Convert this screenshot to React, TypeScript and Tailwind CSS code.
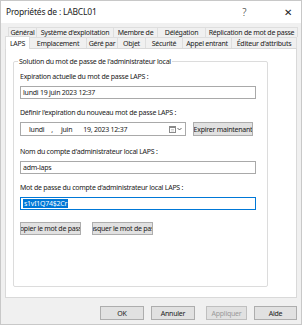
const tabsTop = [
  { label: "Général", w: "w-[29px]" },
  { label: "Système d'exploitation", w: "w-[77px]" },
  { label: "Membre de", w: "w-[44px]" },
  { label: "Délégation", w: "w-[48px]" },
  { label: "Réplication de mot de passe", w: "w-[92px]" },
];

const tabsBottom = [
  { label: "LAPS", w: "w-[25px]", active: true },
  { label: "Emplacement", w: "w-[57px]" },
  { label: "Géré par", w: "w-[31px]" },
  { label: "Objet", w: "w-[28px]" },
  { label: "Sécurité", w: "w-[37px]" },
  { label: "Appel entrant", w: "w-[49px]" },
  { label: "Éditeur d'attributs", w: "w-[65px]" },
];

const Field = ({ children, focused }: { children: React.ReactNode; focused?: boolean }) => (
  <div
    className={`flex h-[13px] w-[236px] items-center border bg-white px-[2px] ${
      focused ? "border-[#0078d7]" : "border-[#a9a9a9]"
    }`}
  >
    {children}
  </div>
);

const WinButton = ({ label, className }: { label: string; className?: string }) => (
  <div
    className={`flex h-[13px] items-center justify-center overflow-hidden whitespace-nowrap border border-[#adadad] bg-[#e1e1e1] ${className ?? ""}`}
  >
    {label}
  </div>
);

const App = () => {
  return (
    <div className="flex h-[325px] w-[302px] flex-col overflow-hidden border border-[#c8c8c8] bg-[#f0f0f0] font-['Noto_Sans',sans-serif] text-[7px] leading-none tracking-[-0.25px] text-[#1a1a1a]">
      {/* Title bar */}
      <div className="flex h-[22px] shrink-0 items-center justify-between bg-white pl-[5px] pr-[9px] text-[8.5px] tracking-[-0.2px]">
        <span>Propriétés de : LABCL01</span>
        <div className="flex items-center gap-[38px] text-[10px] font-light">
          <span>?</span>
          <span>✕</span>
        </div>
      </div>

      {/* Tabs */}
      <div className="mt-[4px] flex h-[10px] pl-[7px]">
        {tabsTop.map(t => (
          <div
            key={t.label}
            className={`flex ${t.w} items-center justify-center border-t border-r border-[#dedede] first:border-l`}
          >
            {t.label}
          </div>
        ))}
      </div>
      <div className="relative z-10 flex h-[11px] pl-[4px]">
        {tabsBottom.map(t => (
          <div
            key={t.label}
            className={`flex ${t.w} items-center justify-center border-t border-r border-[#dedede] first:border-l ${
              t.active ? "-mt-[1px] h-[13px] bg-white" : "bg-[#f0f0f0]"
            }`}
          >
            {t.label}
          </div>
        ))}
      </div>

      {/* Tab panel */}
      <div className="mx-[4px] h-[250px] border border-[#d9d9d9] bg-white px-[7px] pt-[9px]">
        <fieldset className="h-[229px] w-[255px] rounded-[2px] border border-[#dcdcdc] px-[6px]">
          <legend className="ml-[-2px] px-[1px]">Solution du mot de passe de l'administrateur local</legend>
          <div className="mt-[8px] flex flex-col">
            <span>Expiration actuelle du mot de passe LAPS :</span>
            <div className="mt-[6px]">
              <Field>lundi 19 juin 2023 12:37</Field>
            </div>

            <span className="mt-[10px]">Définir l'expiration du nouveau mot de passe LAPS :</span>
            <div className="mt-[6px] flex items-center gap-[7px]">
              <div className="flex h-[14px] w-[166px] items-center border border-[#a9a9a9] bg-white pl-[8px] pr-[3px]">
                <span>lundi</span>
                <span className="ml-[7px]">,</span>
                <span className="ml-[8px]">juin</span>
                <span className="ml-[11px]">19, 2023 12:37</span>
                <div className="ml-auto flex items-center gap-[1px]">
                  <svg width="7" height="7" viewBox="0 0 7 7">
                    <rect x="0.5" y="0.5" width="6" height="6" fill="#fff" stroke="#8a8a8a" />
                    <rect x="0.5" y="0.5" width="6" height="1.5" fill="#8a8a8a" />
                    <path d="M2 3.5h3M2 5h3" stroke="#b0b0b0" strokeWidth="0.6" />
                  </svg>
                  <svg width="5" height="4" viewBox="0 0 5 4">
                    <path d="M0.5 1l2 2 2-2" fill="none" stroke="#444" strokeWidth="0.8" />
                  </svg>
                </div>
              </div>
              <WinButton label="Expirer maintenant" className="h-[14px] w-[60px]" />
            </div>

            <span className="mt-[12px]">Nom du compte d'administrateur local LAPS :</span>
            <div className="mt-[6px]">
              <Field>adm-laps</Field>
            </div>

            <span className="mt-[10px]">Mot de passe du compte d'administrateur local LAPS :</span>
            <div className="mt-[6px]">
              <Field focused>
                <span className="bg-[#0078d7] px-[1px] py-[1px] text-white">s1vI1Q74$2Cr</span>
              </Field>
            </div>

            {/* Buttons are too narrow for their labels, as in the original dialog */}
            <div className="mt-[12px] flex gap-[11px]">
              <WinButton label="Copier le mot de passe" className="w-[61px]" />
              <WinButton label="Masquer le mot de passe" className="w-[61px]" />
            </div>
          </div>
        </fieldset>
      </div>

      {/* Dialog buttons */}
      <div className="mt-[8px] flex justify-end gap-[7px] pr-[4px]">
        <WinButton label="OK" className="h-[14px] w-[44px] border-[#0078d7]" />
        <WinButton label="Annuler" className="h-[14px] w-[44px]" />
        <WinButton label="Appliquer" className="ml-[4px] h-[14px] w-[41px] border-[#bfbfbf] bg-[#cccccc] text-[#9a9a9a]" />
        <WinButton label="Aide" className="h-[14px] w-[43px]" />
      </div>
    </div>
  );
};

export default App;
